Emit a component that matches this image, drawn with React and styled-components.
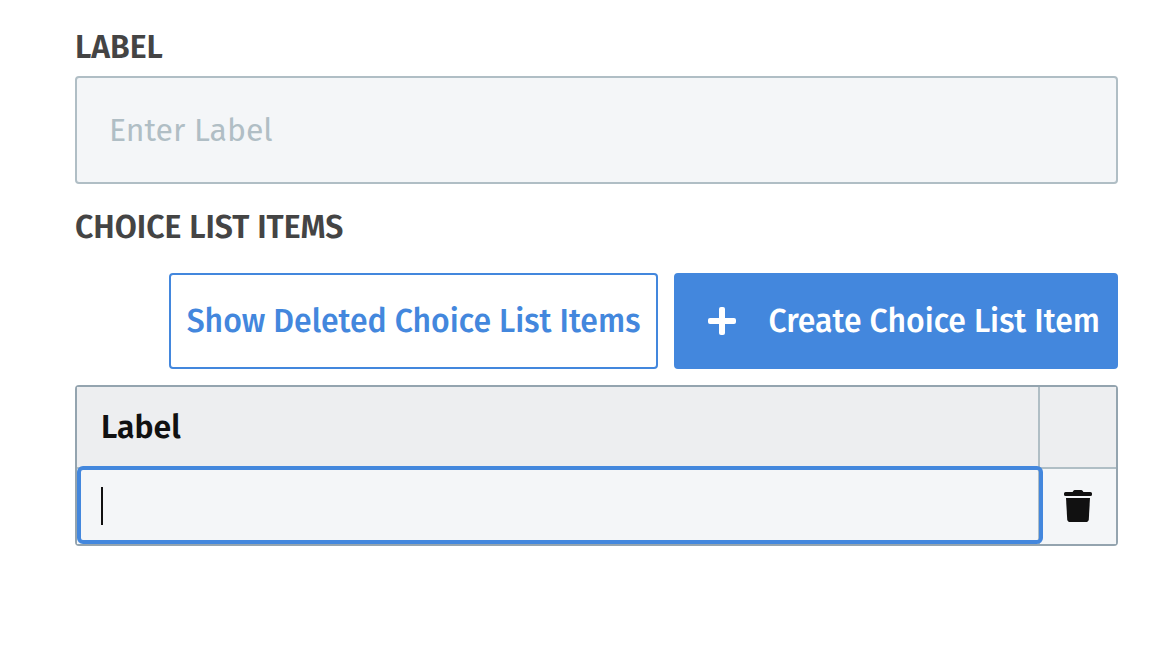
import styled, { createGlobalStyle } from "styled-components";
import { useState } from "react";

const App = () => {
  const [label, setLabel] = useState("");
  const [items, setItems] = useState([{ id: 1, label: "" }]);

  const handleItemChange = (id, value) => {
    setItems(
      items.map((item) => (item.id === id ? { ...item, label: value } : item))
    );
  };

  const addItem = () => {
    setItems([...items, { id: Date.now(), label: "" }]);
  };

  const removeItem = (id) => {
    setItems(items.filter((item) => item.id !== id));
  };

  return (
    <>
      <GlobalStyle />
      <Form onSubmit={(e) => e.preventDefault()}>
        <FieldLabel htmlFor="label">Label</FieldLabel>
        <TextInput
          id="label"
          type="text"
          placeholder="Enter Label"
          value={label}
          onChange={(e) => setLabel(e.target.value)}
        />

        <SectionTitle>Choice List Items</SectionTitle>
        <Toolbar>
          <Button type="button">Show Deleted Choice List Items</Button>
          <Button type="button" $primary onClick={addItem}>
            <PlusIcon />
            Create Choice List Item
          </Button>
        </Toolbar>

        <TableFrame>
          <Table>
            <thead>
              <tr>
                <HeaderCell scope="col">Label</HeaderCell>
                <HeaderCell scope="col" $action aria-label="Actions" />
              </tr>
            </thead>
            <tbody>
              {items.map((item, index) => (
                <tr key={item.id}>
                  <Cell>
                    <CellInput
                      type="text"
                      aria-label="Label"
                      $active={index === 0}
                      value={item.label}
                      onChange={(e) => handleItemChange(item.id, e.target.value)}
                    />
                    {index === 0 && !item.label && <Caret />}
                  </Cell>
                  <Cell $action>
                    <DeleteButton
                      type="button"
                      aria-label="Delete item"
                      onClick={() => removeItem(item.id)}
                    >
                      <TrashIcon />
                    </DeleteButton>
                  </Cell>
                </tr>
              ))}
            </tbody>
          </Table>
        </TableFrame>
      </Form>
    </>
  );
};

const PlusIcon = () => (
  <svg width="28" height="28" viewBox="0 0 28 28" fill="#fff" aria-hidden="true">
    <rect x="0" y="11" width="28" height="6" rx="2" />
    <rect x="11" y="0" width="6" height="28" rx="2" />
  </svg>
);

const TrashIcon = () => (
  <svg width="28" height="32" viewBox="0 0 28 32" fill="#111" aria-hidden="true">
    <path d="M1.5 2H8.6L9.4 .8Q9.9 0 10.8 0h6.4q.9 0 1.4.8L19.4 2h7.1Q28 2 28 3.5v1Q28 6 26.5 6h-25Q0 6 0 4.5v-1Q0 2 1.5 2Z" />
    <path d="M2 8h24l-1.2 21.2Q24.6 32 21.8 32H6.2q-2.8 0-3-2.8Z" />
  </svg>
);

const GlobalStyle = createGlobalStyle`
  * {
    box-sizing: border-box;
  }

  body {
    margin: 0;
    background: #fff;
    font-family: "Fira Sans", "Noto Sans", sans-serif;
    font-size: 32px;
    line-height: 38px;
  }

  button,
  input {
    font: inherit;
  }
`;

const Form = styled.form`
  padding: 28px 36px 28px 75px;
`;

const FieldLabel = styled.label`
  display: block;
  margin-bottom: 10px;
  color: #444;
  font-weight: 600;
  text-transform: uppercase;
`;

const TextInput = styled.input`
  display: block;
  width: 100%;
  height: 108px;
  padding: 0 32px;
  background: #f4f6f8;
  border: 2px solid #b0bec5;
  border-radius: 4px;
  color: #111;

  &::placeholder {
    color: #b0bec5;
    opacity: 1;
  }
`;

const SectionTitle = styled.h2`
  margin: 24px 0 27px;
  color: #444;
  font-size: inherit;
  font-weight: 600;
  text-transform: uppercase;
`;

const Toolbar = styled.div`
  display: flex;
  justify-content: flex-end;
  gap: 16px;
  margin-bottom: 16px;
`;

const Button = styled.button`
  display: flex;
  align-items: center;
  gap: 32px;
  height: 96px;
  padding: ${({ $primary }) => ($primary ? "0 16px 0 32px" : "0 16px")};
  background: ${({ $primary }) => ($primary ? "#4387dd" : "#fff")};
  border: 2px solid #4387dd;
  border-radius: 4px;
  color: ${({ $primary }) => ($primary ? "#fff" : "#4387dd")};
  font-weight: 500;
  white-space: nowrap;
  cursor: pointer;
`;

const TableFrame = styled.div`
  border: 2px solid #94a4af;
  border-radius: 4px;
`;

const Table = styled.table`
  width: 100%;
  table-layout: fixed;
  border-spacing: 0;
`;

const HeaderCell = styled.th`
  width: ${({ $action }) => ($action ? "76px" : "auto")};
  height: 82px;
  padding: 0 24px;
  background: #edeef0;
  border-right: ${({ $action }) => ($action ? "none" : "2px solid #b0bec5")};
  border-bottom: 2px solid #b0bec5;
  color: #111;
  font-weight: 600;
  text-align: left;
`;

const Cell = styled.td`
  position: relative;
  height: 75px;
  padding: 0;
  background: #f4f6f8;
  border-right: ${({ $action }) => ($action ? "none" : "2px solid #b0bec5")};
  vertical-align: top;
`;

const CellInput = styled.input`
  /* the active editor sits over the grid lines around its cell */
  position: absolute;
  top: ${({ $active }) => ($active ? "-3px" : "0")};
  right: ${({ $active }) => ($active ? "-5px" : "0")};
  bottom: 0;
  left: 0;
  z-index: 1;
  width: ${({ $active }) => ($active ? "calc(100% + 5px)" : "100%")};
  padding: 0 20px;
  background: transparent;
  border: 4px solid ${({ $active }) => ($active ? "#4387dd" : "transparent")};
  border-radius: 6px;
  outline: none;
  color: #111;
`;

const Caret = styled.span`
  position: absolute;
  top: 18px;
  left: 24px;
  width: 2px;
  height: 38px;
  background: #111;
`;

const DeleteButton = styled.button`
  display: flex;
  align-items: center;
  justify-content: center;
  width: 100%;
  height: 74px;
  padding: 0;
  background: none;
  border: none;
  cursor: pointer;
`;

export default App;
